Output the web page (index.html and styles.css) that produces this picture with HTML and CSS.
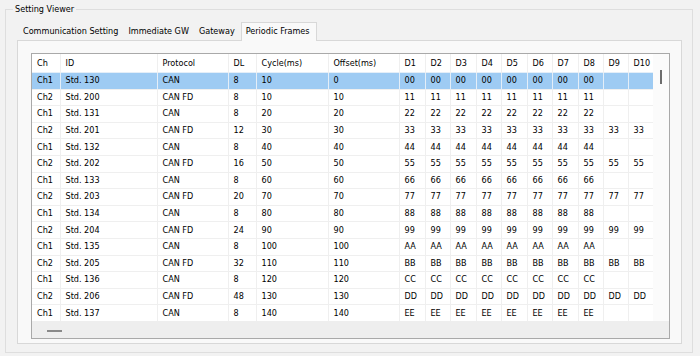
FILE: index.html
```html
<!DOCTYPE html>
<html lang="en">
<head>
  <meta charset="UTF-8">
  <title>Setting Viewer</title>
  <link rel="stylesheet" href="styles.css">
</head>
<body>
  <fieldset class="group">
    <legend>Setting Viewer</legend>
    <div class="tabs">
      <div class="tab">Communication Setting</div>
      <div class="tab">Immediate GW</div>
      <div class="tab">Gateway</div>
      <div class="tab active">Periodic Frames</div>
    </div>
    <div class="panel">
      <div class="grid-box">
        <div class="grid-main">
          <table class="frames">
            <colgroup>
              <col style="width:28px"><col style="width:97px"><col style="width:71px"><col style="width:28px">
              <col style="width:72px"><col style="width:71px">
              <col style="width:26px"><col style="width:25px"><col style="width:26px"><col style="width:25px"><col style="width:26px">
              <col style="width:25px"><col style="width:26px"><col style="width:25px"><col style="width:25px"><col style="width:25px">
            </colgroup>
            <thead>
              <tr><th>Ch</th><th>ID</th><th>Protocol</th><th>DL</th><th>Cycle(ms)</th><th>Offset(ms)</th><th>D1</th><th>D2</th><th>D3</th><th>D4</th><th>D5</th><th>D6</th><th>D7</th><th>D8</th><th>D9</th><th>D10</th></tr>
            </thead>
            <tbody>
              <tr class="selected"><td>Ch1</td><td>Std. 130</td><td>CAN</td><td>8</td><td>10</td><td>0</td><td>00</td><td>00</td><td>00</td><td>00</td><td>00</td><td>00</td><td>00</td><td>00</td><td></td><td></td></tr>
              <tr><td>Ch2</td><td>Std. 200</td><td>CAN FD</td><td>8</td><td>10</td><td>10</td><td>11</td><td>11</td><td>11</td><td>11</td><td>11</td><td>11</td><td>11</td><td>11</td><td></td><td></td></tr>
              <tr><td>Ch1</td><td>Std. 131</td><td>CAN</td><td>8</td><td>20</td><td>20</td><td>22</td><td>22</td><td>22</td><td>22</td><td>22</td><td>22</td><td>22</td><td>22</td><td></td><td></td></tr>
              <tr><td>Ch2</td><td>Std. 201</td><td>CAN FD</td><td>12</td><td>30</td><td>30</td><td>33</td><td>33</td><td>33</td><td>33</td><td>33</td><td>33</td><td>33</td><td>33</td><td>33</td><td>33</td></tr>
              <tr><td>Ch1</td><td>Std. 132</td><td>CAN</td><td>8</td><td>40</td><td>40</td><td>44</td><td>44</td><td>44</td><td>44</td><td>44</td><td>44</td><td>44</td><td>44</td><td></td><td></td></tr>
              <tr><td>Ch2</td><td>Std. 202</td><td>CAN FD</td><td>16</td><td>50</td><td>50</td><td>55</td><td>55</td><td>55</td><td>55</td><td>55</td><td>55</td><td>55</td><td>55</td><td>55</td><td>55</td></tr>
              <tr><td>Ch1</td><td>Std. 133</td><td>CAN</td><td>8</td><td>60</td><td>60</td><td>66</td><td>66</td><td>66</td><td>66</td><td>66</td><td>66</td><td>66</td><td>66</td><td></td><td></td></tr>
              <tr><td>Ch2</td><td>Std. 203</td><td>CAN FD</td><td>20</td><td>70</td><td>70</td><td>77</td><td>77</td><td>77</td><td>77</td><td>77</td><td>77</td><td>77</td><td>77</td><td>77</td><td>77</td></tr>
              <tr><td>Ch1</td><td>Std. 134</td><td>CAN</td><td>8</td><td>80</td><td>80</td><td>88</td><td>88</td><td>88</td><td>88</td><td>88</td><td>88</td><td>88</td><td>88</td><td></td><td></td></tr>
              <tr><td>Ch2</td><td>Std. 204</td><td>CAN FD</td><td>24</td><td>90</td><td>90</td><td>99</td><td>99</td><td>99</td><td>99</td><td>99</td><td>99</td><td>99</td><td>99</td><td>99</td><td>99</td></tr>
              <tr><td>Ch1</td><td>Std. 135</td><td>CAN</td><td>8</td><td>100</td><td>100</td><td>AA</td><td>AA</td><td>AA</td><td>AA</td><td>AA</td><td>AA</td><td>AA</td><td>AA</td><td></td><td></td></tr>
              <tr><td>Ch2</td><td>Std. 205</td><td>CAN FD</td><td>32</td><td>110</td><td>110</td><td>BB</td><td>BB</td><td>BB</td><td>BB</td><td>BB</td><td>BB</td><td>BB</td><td>BB</td><td>BB</td><td>BB</td></tr>
              <tr><td>Ch1</td><td>Std. 136</td><td>CAN</td><td>8</td><td>120</td><td>120</td><td>CC</td><td>CC</td><td>CC</td><td>CC</td><td>CC</td><td>CC</td><td>CC</td><td>CC</td><td></td><td></td></tr>
              <tr><td>Ch2</td><td>Std. 206</td><td>CAN FD</td><td>48</td><td>130</td><td>130</td><td>DD</td><td>DD</td><td>DD</td><td>DD</td><td>DD</td><td>DD</td><td>DD</td><td>DD</td><td>DD</td><td>DD</td></tr>
              <tr><td>Ch1</td><td>Std. 137</td><td>CAN</td><td>8</td><td>140</td><td>140</td><td>EE</td><td>EE</td><td>EE</td><td>EE</td><td>EE</td><td>EE</td><td>EE</td><td>EE</td><td></td><td></td></tr>
            </tbody>
          </table>
          <div class="vscroll"><div class="vthumb"></div></div>
        </div>
        <div class="hscroll"><div class="hthumb"></div></div>
      </div>
    </div>
  </fieldset>
</body>
</html>
```

FILE: styles.css
```css
body {
  margin: 0;
  background: #f2f2f2;
  font-family: "DejaVu Sans Condensed", "Liberation Sans", sans-serif;
  font-size: 9px;
  color: #000;
  height: 356px;
  overflow: hidden;
}
.group {
  margin: 3px 7px 3px 5px;
  padding: 0 10px 7px 11px;
  border: 1px solid #dedede;
  height: 350px;
  box-sizing: border-box;
}
.group legend {
  margin-left: -4px;
  padding: 0 2px;
  line-height: 13px;
}
.tabs {
  display: flex;
  margin-top: 6px;
  padding-left: 1px;
  height: 18px;
  align-items: flex-end;
}
.tab {
  padding: 0 5px;
  height: 17px;
  line-height: 16px;
}
.tab.active {
  height: 18px;
  line-height: 17px;
  background: #f9f9f9;
  border: 1px solid #d8d8d8;
  border-bottom: none;
  margin-left: 1px;
  padding: 0 6px 0 4px;
  position: relative;
  top: 1px;
}
.panel {
  background: #f9f9f9;
  border: 1px solid #d8d8d8;
  padding: 12px 11px 4px 13px;
}
.grid-box {
  border: 1px solid #a9a9a9;
  background: #eeeeee;
}
.grid-main {
  display: flex;
  background: #fbfbfb;
}
.frames {
  border-collapse: collapse;
  table-layout: fixed;
  width: 621px;
  background: #fff;
}
.frames th,
.frames td {
  padding: 0 0 0 5px;
  text-align: left;
  font-weight: normal;
  white-space: nowrap;
  overflow: hidden;
  border-left: 1px solid #efefef;
}
.frames th:first-child,
.frames td:first-child {
  border-left: none;
  padding-left: 5px;
}
.frames th {
  height: 18px;
  line-height: 18px;
}
.frames td {
  height: 15.6px;
  line-height: 15px;
  border-top: 1px solid #efefef;
}
.frames tr.selected td {
  background: #9ecbf3;
  border-color: #e4eef8;
}
.vscroll {
  flex: 1;
  position: relative;
}
.vthumb {
  position: absolute;
  left: 7px;
  top: 16px;
  width: 2px;
  height: 14px;
  background: #6d6d6d;
}
.hscroll {
  height: 17px;
  position: relative;
}
.hthumb {
  position: absolute;
  left: 15px;
  top: 9px;
  width: 15px;
  height: 2px;
  background: #8a8a8a;
}
```
